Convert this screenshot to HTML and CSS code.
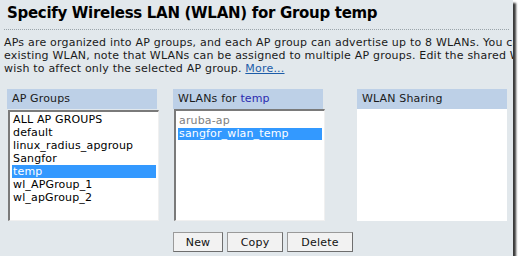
FILE: index.html
```html
<!DOCTYPE html>
<html lang="en">
<head>
    <meta charset="UTF-8">
    <title>Specify Wireless LAN</title>
    <link rel="stylesheet" href="styles.css">
</head>
<body>
    <div class="frame">
        <h1 class="title">Specify Wireless LAN (WLAN) for Group temp</h1>
        <p class="intro">
            APs are organized into AP groups, and each AP group can advertise up to 8 WLANs. You can<br>
            existing WLAN, note that WLANs can be assigned to multiple AP groups. Edit the shared WLAN<br>
            wish to affect only the selected AP group. <a href="#">More...</a>
        </p>

        <div class="panels">
            <div class="panel panel-groups">
                <div class="panel-head">AP Groups</div>
                <ul class="listbox">
                    <li>ALL AP GROUPS</li>
                    <li>default</li>
                    <li>linux_radius_apgroup</li>
                    <li>Sangfor</li>
                    <li class="selected">temp</li>
                    <li>wl_APGroup_1</li>
                    <li>wl_apGroup_2</li>
                </ul>
            </div>
            <div class="panel panel-wlans">
                <div class="panel-head">WLANs for <span class="group-name">temp</span></div>
                <ul class="listbox wlan-list">
                    <li class="muted">aruba-ap</li>
                    <li class="selected">sangfor_wlan_temp</li>
                </ul>
            </div>
            <div class="panel panel-sharing">
                <div class="panel-head">WLAN Sharing</div>
                <div class="sharing-body"></div>
            </div>
        </div>

        <div class="actions">
            <button class="btn btn-new">New</button>
            <button class="btn btn-copy">Copy</button>
            <button class="btn btn-delete">Delete</button>
        </div>
    </div>
</body>
</html>
```

FILE: styles.css
```css
body {
    margin: 0;
    background-color: #ffffff;
    font-family: "DejaVu Sans", Verdana, sans-serif;
    font-size: 11px;
    color: #000;
}
.frame {
    width: 513px;
    height: 256px;
    background-color: #e2e8ec;
    box-shadow: 3px 3px 2px #3a3a3a;
    overflow: hidden;
}
.title {
    margin: 0 4px;
    padding: 3px 3px 6px 3px;
    font-size: 15px;
    font-weight: bold;
    letter-spacing: -0.3px;
    line-height: 20px;
    white-space: nowrap;
    border-bottom: 1px dotted #9aa4aa;
}
.intro {
    margin: 6px 0 0 4px;
    line-height: 13px;
    letter-spacing: 0.2px;
    white-space: nowrap;
    color: #1a1a1a;
}
.intro a {
    color: #1c5ca8;
}
.panels {
    display: flex;
    margin-top: 14px;
    padding-left: 7px;
}
.panel {
    width: 150px;
    letter-spacing: 0.15px;
}
.panel-wlans {
    margin-left: 16px;
}
.panel-sharing {
    margin-left: 34px;
}
.panel-head {
    height: 20px;
    line-height: 20px;
    padding-left: 5px;
    background-color: #bdd0e7;
    color: #1a1a1a;
}
.group-name {
    color: #2b2bb0;
}
.listbox {
    list-style: none;
    margin: 1px 0 0 1px;
    padding: 1px 2px 0 2px;
    width: 144px;
    height: 107px;
    background-color: #fff;
    border-style: solid;
    border-width: 2px 1px 1px 2px;
    border-color: #7a7a7a #f0f0f0 #f0f0f0 #7a7a7a;
}
.listbox li {
    height: 13px;
    line-height: 13px;
    padding-left: 1px;
    white-space: nowrap;
}
.listbox li.selected {
    background-color: #3399ff;
    color: #fff;
}
.listbox li.muted {
    color: #808080;
}
.wlan-list {
    margin-top: 0;
    padding-top: 3px;
    height: 106px;
}
.wlan-list li.muted {
    height: 14px;
}
.wlan-list li.selected {
    height: 12px;
    line-height: 12px;
}
.sharing-body {
    height: 112px;
    background-color: #fff;
}
.actions {
    display: flex;
    gap: 4px;
    margin-top: 11px;
    padding-left: 173px;
}
.btn {
    height: 20px;
    padding: 0;
    font-family: "DejaVu Sans", Verdana, sans-serif;
    font-size: 11px;
    letter-spacing: 0.2px;
    color: #111;
    background-color: #f2f2f2;
    border: 1px solid #9a9a9a;
    border-right-color: #6e6e6e;
    border-bottom-color: #6e6e6e;
}
.btn-new {
    width: 50px;
}
.btn-copy {
    width: 56px;
}
.btn-delete {
    width: 66px;
}
```
